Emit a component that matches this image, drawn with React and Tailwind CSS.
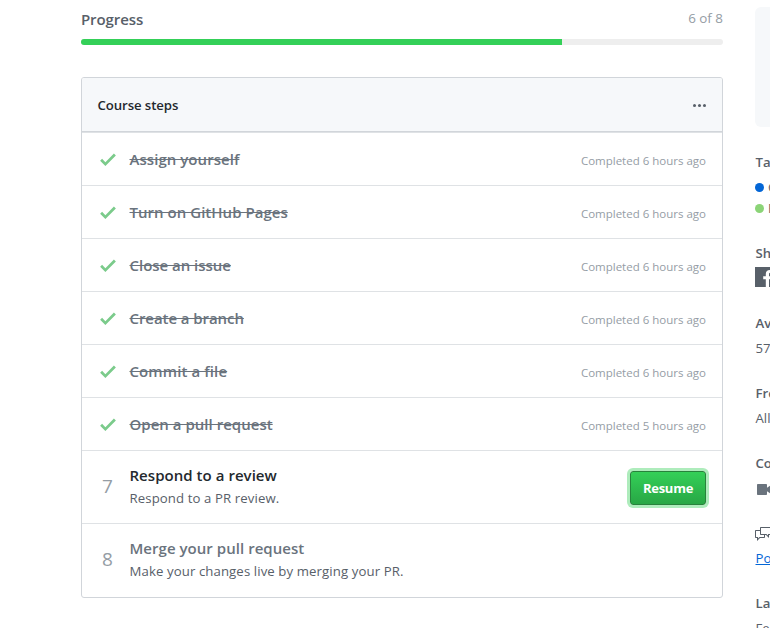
import React from "react";

const doneSteps = [
  { title: "Assign yourself", when: "Completed 6 hours ago", tracking: "tracking-[0.05px]" },
  { title: "Turn on GitHub Pages", when: "Completed 6 hours ago", tracking: "tracking-[0.03px]" },
  { title: "Close an issue", when: "Completed 6 hours ago", tracking: "tracking-[-0.03px]" },
  { title: "Create a branch", when: "Completed 6 hours ago", tracking: "tracking-[-0.07px]" },
  { title: "Commit a file", when: "Completed 6 hours ago", tracking: "tracking-[0.1px]" },
  { title: "Open a pull request", when: "Completed 5 hours ago", tracking: "tracking-[0.02px]" },
];

function Check() {
  return (
    <svg className="ml-[18px] mr-[13.5px] h-[21px] w-4 shrink-0" viewBox="0 0 12 16" fill="#7bcb8b">
      <path d="M12 5l-8 8-4-4 1.5-1.5L4 10l6.5-6.5L12 5z" />
    </svg>
  );
}

function DoneStep({ title, when, tracking }) {
  return (
    <div className="flex h-[53px] items-center border-t border-[#dfe2e5] pr-4">
      <Check />
      <span className={"text-[15px] font-semibold leading-6 text-[#6a737d] line-through " + tracking}>{title}</span>
      <span className="ml-auto pt-[3px] text-[11.5px] leading-[18px] text-[#959da5]">{when}</span>
    </div>
  );
}

function OpenStep({ number, title, text, titleColor, children }) {
  return (
    <div className="flex h-[73px] items-center border-t border-[#dfe2e5] pr-4">
      <span className="-mt-[2px] w-[47.5px] pl-[20px] text-[19px] leading-6 text-[#959da5]">{number}</span>
      <div className="-mt-[2px] flex flex-col">
        <span className={"text-[15px] font-semibold leading-[23px] tracking-[0.04px] " + titleColor}>{title}</span>
        <span className="pt-px text-[13.2px] leading-[21px] tracking-[0.1px] text-[#586069]">{text}</span>
      </div>
      {children}
    </div>
  );
}

export default function App() {
  return (
    <div className="flex h-[628px] w-[770px] overflow-hidden bg-white pl-[81px] font-['Open_Sans','Noto_Sans',sans-serif] text-[#586069]">
      <main className="w-[642px] shrink-0">
        <div className="flex h-[39px] justify-between">
          <h2 className="pt-[7px] text-[15px] font-semibold leading-6 tracking-[-0.1px]">Progress</h2>
          <span className="pt-[8px] text-[13.4px] leading-[21px] text-[#959da5]">6 of 8</span>
        </div>
        <div className="h-[6px] overflow-hidden rounded-[3px] bg-[#eeeeee]">
          <div className="h-full w-[481px] bg-[#34d058]" />
        </div>
        <section className="mt-8 h-[521px] overflow-hidden rounded-[3px] border border-[#d1d5da]">
          <header className="flex h-[54px] items-center justify-between border-b border-[#d1d5da] bg-[#f6f8fa] pl-[15.5px] pr-4">
            <h3 className="pt-[2px] text-[13.2px] font-semibold leading-[21px] tracking-[-0.08px] text-[#24292e]">Course steps</h3>
            <svg className="h-4 w-[13px]" viewBox="0 0 13 16" fill="#586069">
              <circle cx="1.5" cy="8.500" r="1.5" />
              <circle cx="6.5" cy="8.500" r="1.5" />
              <circle cx="11.5" cy="8.500" r="1.5" />
            </svg>
          </header>
          {doneSteps.map((s) => (
            <DoneStep key={s.title} title={s.title} when={s.when} tracking={s.tracking} />
          ))}
          <OpenStep number="7" title="Respond to a review" text="Respond to a PR review." titleColor="text-[#24292e]">
            <button className="ml-auto mt-px h-[34px] w-[76px] rounded-[3px] border border-[#28823c] bg-linear-to-b from-[#34d058] to-[#28a745] text-[13px] font-bold leading-5 tracking-[-0.25px] text-white shadow-[0_0_0_3px_#aeecbc]">
              Resume
            </button>
          </OpenStep>
          <OpenStep number="8" title="Merge your pull request" text="Make your changes live by merging your PR." titleColor="text-[#6a737d]" />
        </section>
      </main>

      <aside className="ml-8 w-[160px] shrink-0 text-[13.2px] leading-[21px]">
        <div className="mt-[7px] h-[120px] rounded-[6px] bg-[#f6f8fa]" />
        <h4 className="mt-[25px] pl-[0.5px] font-semibold">Tag</h4>
        <div className="mt-[3.5px] flex h-[21px] items-center gap-[4px]">
          <span className="h-[9px] w-[9px] rounded-full bg-[#0366d6]" />
          <span>G</span>
        </div>
        <div className="flex h-[21px] items-center gap-[4px]">
          <span className="h-[9px] w-[9px] rounded-full bg-[#8bd477]" />
          <span>P</span>
        </div>
        <h4 className="mt-[24.5px] pl-[0.5px] font-semibold">Sh</h4>
        <svg className="mt-[3px] h-[20px] w-[20px]" viewBox="0 0 20 20">
          <path fill="#586069" d="M0 0h20v20h-6v-7.8h2.600l.4-3h-3V7.300c0-.9.3-1.500 1.500-1.500H17V3.100c-.3 0-1.200-.1-2.300-.1-2.300 0-3.900 1.400-3.900 4v2.200H8.200v3h2.600V20H0z" />
        </svg>
        <h4 className="mt-[26px] pl-[0.5px] font-semibold">Av</h4>
        <p className="mt-[4px] pl-[0.5px]">57</p>
        <h4 className="mt-[24px] pl-[0.5px] font-semibold">Fre</h4>
        <p className="mt-[4px] pl-[0.5px]">All</p>
        <h4 className="mt-[24px] pl-[0.5px] font-semibold">Co</h4>
        <svg className="ml-[2px] mt-[8px] h-4 w-4" viewBox="0 0 16 16" fill="#6a737d">
          <path d="M15.200 2.090L10 5.720V3c0-.55-.45-1-1-1H1c-.55 0-1 .45-1 1v9c0 .55.45 1 1 1h8c.55 0 1-.45 1-1V9.280l5.200 3.630c.33.230.8 0 .8-.41v-10c0-.41-.47-.64-.8-.41z" />
        </svg>
        <svg className="mt-[28px] h-4 w-4" viewBox="0 0 16 16" fill="#586069">
          <path d="M15 1H6c-.55 0-1 .45-1 1v2H1c-.55 0-1 .45-1 1v6c0 .55.45 1 1 1h1v3l3-3h4c.55 0 1-.45 1-1V9h1l3 3V9h1c.55 0 1-.45 1-1V2c0-.55-.45-1-1-1zM9 11H4.500L3 12.500V11H1V5h4v3c0 .55.45 1 1 1h3v2zm6-3h-2v1.500L11.500 8H6V2h9v6z" />
        </svg>
        <p className="mt-[6px] pl-[0.5px] text-[#0366d6] underline">Po</p>
        <h4 className="mt-[24px] pl-[0.5px] font-semibold">La</h4>
        <p className="mt-[4px] pl-[0.5px]">Fe</p>
      </aside>
    </div>
  );
}
